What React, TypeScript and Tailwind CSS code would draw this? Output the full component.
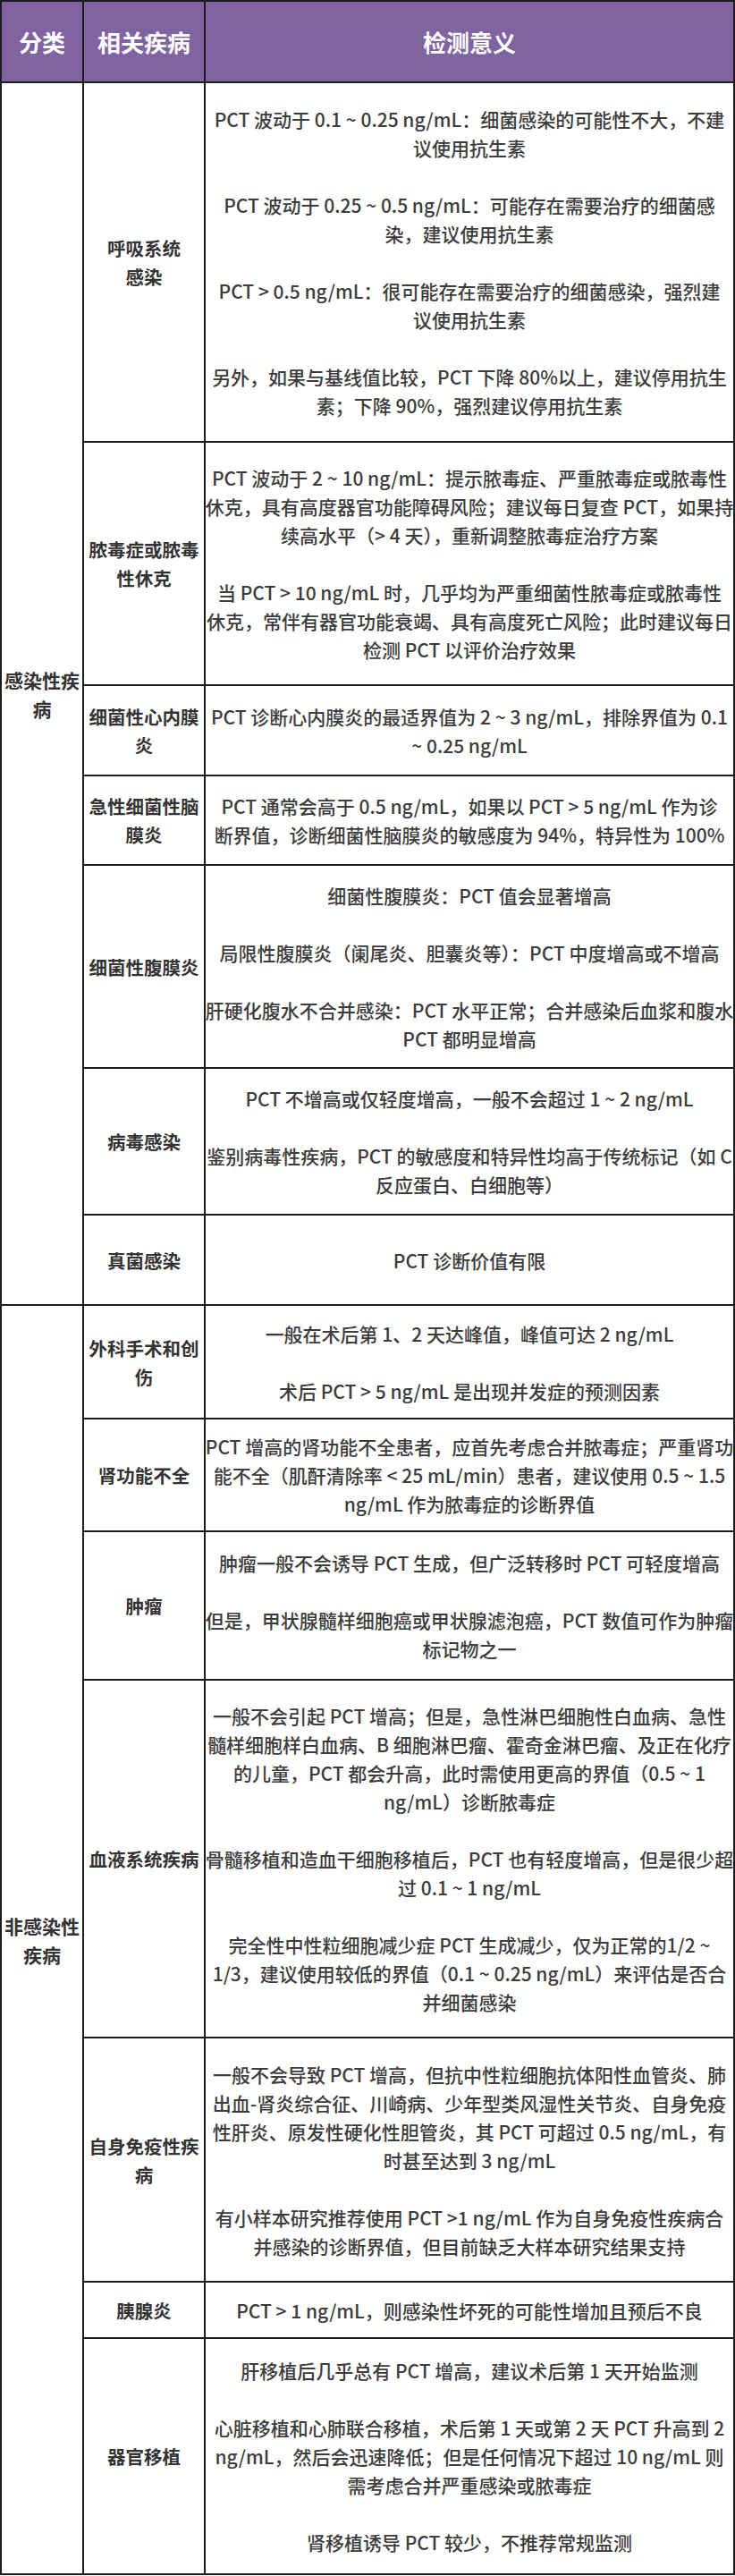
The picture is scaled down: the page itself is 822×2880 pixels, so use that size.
type Row = {
  label: string[];
  paras: string[][];
  h: string;
};

const infectious: Row[] = [
  {
    label: ["呼吸系统", "感染"],
    h: "h-[402px]",
    paras: [
      ["PCT 波动于 0.1 ~ 0.25 ng/mL：细菌感染的可能性不大，不建", "议使用抗生素"],
      ["PCT 波动于 0.25 ~ 0.5 ng/mL：可能存在需要治疗的细菌感", "染，建议使用抗生素"],
      ["PCT > 0.5 ng/mL：很可能存在需要治疗的细菌感染，强烈建", "议使用抗生素"],
      ["另外，如果与基线值比较，PCT 下降 80%以上，建议停用抗生", "素；下降 90%，强烈建议停用抗生素"],
    ],
  },
  {
    label: ["脓毒症或脓毒", "性休克"],
    h: "h-[272px]",
    paras: [
      [
        "PCT 波动于 2 ~ 10 ng/mL：提示脓毒症、严重脓毒症或脓毒性",
        "休克，具有高度器官功能障碍风险；建议每日复查 PCT，如果持",
        "续高水平（> 4 天），重新调整脓毒症治疗方案",
      ],
      [
        "当 PCT > 10 ng/mL 时，几乎均为严重细菌性脓毒症或脓毒性",
        "休克，常伴有器官功能衰竭、具有高度死亡风险；此时建议每日",
        "检测 PCT 以评价治疗效果",
      ],
    ],
  },
  {
    label: ["细菌性心内膜", "炎"],
    h: "h-[101px]",
    paras: [["PCT 诊断心内膜炎的最适界值为 2 ~ 3 ng/mL，排除界值为 0.1", "~ 0.25 ng/mL"]],
  },
  {
    label: ["急性细菌性脑", "膜炎"],
    h: "h-[100px]",
    paras: [["PCT 通常会高于 0.5 ng/mL，如果以 PCT > 5 ng/mL 作为诊", "断界值，诊断细菌性脑膜炎的敏感度为 94%，特异性为 100%"]],
  },
  {
    label: ["细菌性腹膜炎"],
    h: "h-[227px]",
    paras: [
      ["细菌性腹膜炎：PCT 值会显著增高"],
      ["局限性腹膜炎（阑尾炎、胆囊炎等）：PCT 中度增高或不增高"],
      ["肝硬化腹水不合并感染：PCT 水平正常；合并感染后血浆和腹水", "PCT 都明显增高"],
    ],
  },
  {
    label: ["病毒感染"],
    h: "h-[164px]",
    paras: [
      ["PCT 不增高或仅轻度增高，一般不会超过 1 ~ 2 ng/mL"],
      ["鉴别病毒性疾病，PCT 的敏感度和特异性均高于传统标记（如 C", "反应蛋白、白细胞等）"],
    ],
  },
  {
    label: ["真菌感染"],
    h: "h-[101px]",
    paras: [["PCT 诊断价值有限"]],
  },
];

const nonInfectious: Row[] = [
  {
    label: ["外科手术和创", "伤"],
    h: "h-[127px]",
    paras: [["一般在术后第 1、2 天达峰值，峰值可达 2 ng/mL"], ["术后 PCT > 5 ng/mL 是出现并发症的预测因素"]],
  },
  {
    label: ["肾功能不全"],
    h: "h-[126px]",
    paras: [
      [
        "PCT 增高的肾功能不全患者，应首先考虑合并脓毒症；严重肾功",
        "能不全（肌酐清除率 < 25 mL/min）患者，建议使用 0.5 ~ 1.5",
        "ng/mL 作为脓毒症的诊断界值",
      ],
    ],
  },
  {
    label: ["肿瘤"],
    h: "h-[166px]",
    paras: [
      ["肿瘤一般不会诱导 PCT 生成，但广泛转移时 PCT 可轻度增高"],
      ["但是，甲状腺髓样细胞癌或甲状腺滤泡癌，PCT 数值可作为肿瘤", "标记物之一"],
    ],
  },
  {
    label: ["血液系统疾病"],
    h: "h-[400px]",
    paras: [
      [
        "一般不会引起 PCT 增高；但是，急性淋巴细胞性白血病、急性",
        "髓样细胞样白血病、B 细胞淋巴瘤、霍奇金淋巴瘤、及正在化疗",
        "的儿童，PCT 都会升高，此时需使用更高的界值（0.5 ~ 1",
        "ng/mL）诊断脓毒症",
      ],
      ["骨髓移植和造血干细胞移植后，PCT 也有轻度增高，但是很少超", "过 0.1 ~ 1 ng/mL"],
      [
        "完全性中性粒细胞减少症 PCT 生成减少，仅为正常的1/2 ~",
        "1/3，建议使用较低的界值（0.1 ~ 0.25 ng/mL）来评估是否合",
        "并细菌感染",
      ],
    ],
  },
  {
    label: ["自身免疫性疾", "病"],
    h: "h-[273px]",
    paras: [
      [
        "一般不会导致 PCT 增高，但抗中性粒细胞抗体阳性血管炎、肺",
        "出血-肾炎综合征、川崎病、少年型类风湿性关节炎、自身免疫",
        "性肝炎、原发性硬化性胆管炎，其 PCT 可超过 0.5 ng/mL，有",
        "时甚至达到 3 ng/mL",
      ],
      ["有小样本研究推荐使用 PCT >1 ng/mL 作为自身免疫性疾病合", "并感染的诊断界值，但目前缺乏大样本研究结果支持"],
    ],
  },
  {
    label: ["胰腺炎"],
    h: "h-[63px]",
    paras: [["PCT > 1 ng/mL，则感染性坏死的可能性增加且预后不良"]],
  },
  {
    label: ["器官移植"],
    h: "h-[264px]",
    paras: [
      ["肝移植后几乎总有 PCT 增高，建议术后第 1 天开始监测"],
      [
        "心脏移植和心肺联合移植，术后第 1 天或第 2 天 PCT 升高到 2",
        "ng/mL，然后会迅速降低；但是任何情况下超过 10 ng/mL 则",
        "需考虑合并严重感染或脓毒症",
      ],
      ["肾移植诱导 PCT 较少，不推荐常规监测"],
    ],
  },
];

const cell = "border-2 border-[#1c1c1c] align-middle text-center p-0";

function Lines({ lines }: { lines: string[] }) {
  return (
    <>
      {lines.map((l, i) => (
        <div key={i} className="whitespace-nowrap">
          {l}
        </div>
      ))}
    </>
  );
}

function Group({ title, rows }: { title: string[]; rows: Row[] }) {
  return (
    <>
      {rows.map((row, i) => (
        <tr key={i} className={row.h}>
          {i === 0 && (
            <td rowSpan={rows.length} className={`${cell} font-bold text-[21px] leading-[32px] text-[#333]`}>
              <Lines lines={title} />
            </td>
          )}
          <td className={`${cell} font-bold text-[20.5px] leading-[32px] text-[#333]`}>
            <Lines lines={row.label} />
          </td>
          <td className={`${cell} text-[21px] leading-[32px] font-medium text-[#3c3c3c]`}>
            <div className="flex flex-col items-center gap-8">
              {row.paras.map((p, j) => (
                <div key={j}>
                  <Lines lines={p} />
                </div>
              ))}
            </div>
          </td>
        </tr>
      ))}
    </>
  );
}

export default function App() {
  return (
    <div
      className="w-[822px] bg-white"
      style={{ fontFamily: '"Noto Sans CJK SC", "Noto Sans", sans-serif' }}
    >
      <table className="w-[822px] table-fixed border-collapse">
        <colgroup>
          <col className="w-[92px]" />
          <col className="w-[136px]" />
          <col />
        </colgroup>
        <thead>
          <tr className="h-[91px] bg-[#8064a2]">
            <th className={`${cell} text-[26px] font-bold text-white`}>分类</th>
            <th className={`${cell} text-[26px] font-bold text-white`}>相关疾病</th>
            <th className={`${cell} text-[26px] font-bold text-white`}>检测意义</th>
          </tr>
        </thead>
        <tbody>
          <Group title={["感染性疾", "病"]} rows={infectious} />
          <Group title={["非感染性", "疾病"]} rows={nonInfectious} />
        </tbody>
      </table>
    </div>
  );
}
